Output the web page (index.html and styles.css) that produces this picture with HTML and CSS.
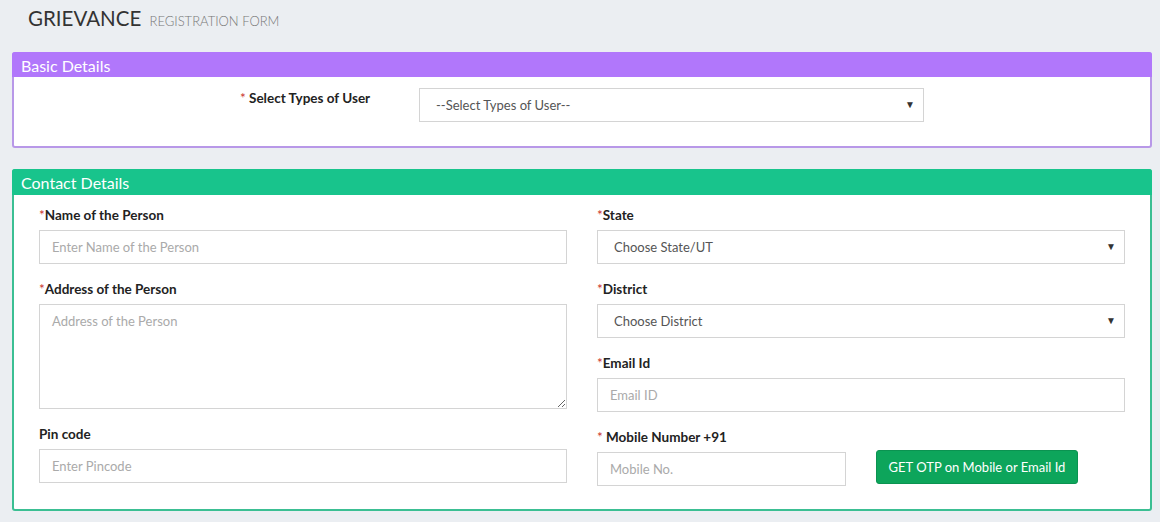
FILE: index.html
```html
<!DOCTYPE html>
<html>
<head>
<meta charset="utf-8">
<link rel="stylesheet" href="styles.css">
</head>
<body>
<div class="page">
  <h1 class="title">GRIEVANCE <small>REGISTRATION FORM</small></h1>

  <section class="panel panel-purple">
    <div class="panel-head">Basic Details</div>
    <div class="panel-body basic-body">
      <label class="lbl basic-lbl"><span class="req">*</span> Select Types of User</label>
      <div class="sel basic-sel">
        <select><option>--Select Types of User--</option></select>
        <span class="caret">▼</span>
      </div>
    </div>
  </section>

  <section class="panel panel-green">
    <div class="panel-head">Contact Details</div>
    <div class="panel-body cols">
      <div class="col">
        <div class="group">
          <label class="lbl"><span class="req">*</span>Name of the Person</label>
          <input class="ctl" type="text" placeholder="Enter Name of the Person">
        </div>
        <div class="group">
          <label class="lbl"><span class="req">*</span>Address of the Person</label>
          <textarea class="ctl area" placeholder="Address of the Person"></textarea>
        </div>
        <div class="group">
          <label class="lbl">Pin code</label>
          <input class="ctl" type="text" placeholder="Enter Pincode">
        </div>
      </div>
      <div class="col">
        <div class="group">
          <label class="lbl"><span class="req">*</span>State</label>
          <div class="sel">
            <select><option>Choose State/UT</option></select>
            <span class="caret">▼</span>
          </div>
        </div>
        <div class="group">
          <label class="lbl"><span class="req">*</span>District</label>
          <div class="sel">
            <select><option>Choose District</option></select>
            <span class="caret">▼</span>
          </div>
        </div>
        <div class="group">
          <label class="lbl"><span class="req">*</span>Email Id</label>
          <input class="ctl" type="text" placeholder="Email ID">
        </div>
        <div class="group">
          <label class="lbl"><span class="req">*</span> Mobile Number +91</label>
          <div class="mobile-row">
            <input class="ctl" type="text" placeholder="Mobile No.">
            <div class="btn-cell"><button class="btn" type="button">GET OTP on Mobile or Email Id</button></div>
          </div>
        </div>
      </div>
    </div>
  </section>
</div>
</body>
</html>
```

FILE: styles.css
```css
* { box-sizing: border-box; }
html, body { margin: 0; padding: 0; }
body {
  background: #ebeef2;
  font-family: "Source Sans Pro", Lato, "Noto Sans", sans-serif;
  color: #333;
}
.page { padding: 0 8px 0 12px; width: 1160px; }

.title {
  margin: 0;
  padding: 6px 0 0 16px;
  height: 52px;
  font-size: 20.5px;
  font-weight: 400;
  color: #333;
}
.title small {
  font-size: 13px;
  font-weight: 300;
  color: #777;
  margin-left: 3px;
}

.panel {
  background: #fff;
  border: 2px solid;
  border-radius: 3px;
  width: 1140px;
}
.panel-purple { border-color: #b898e8; }
.panel-green { border-color: #3bbf93; margin-top: 21px; }

.panel-head {
  color: #fff;
  font-size: 16px;
  padding-left: 9px;
  margin: -2px -2px 0 -2px;
  border-radius: 3px 3px 0 0;
}
.panel-purple .panel-head { background: #b177fb; height: 25px; line-height: 28px; }
.panel-green .panel-head { background: #18c48c; height: 26px; line-height: 28px; }

.basic-body {
  display: flex;
  align-items: flex-start;
  padding: 11px 0 24px 226px;
}
.basic-lbl { width: 179px; padding-top: 1px; }
.basic-sel { width: 505px; }

.lbl {
  display: block;
  font-size: 13.5px;
  font-weight: 700;
  color: #222;
  line-height: 18px;
}
.req { color: #c9302c; font-weight: 400; }

.cols {
  display: flex;
  gap: 30px;
  padding: 11px 25px 23px 25px;
}
.col { flex: 1; display: flex; flex-direction: column; gap: 16px; }
.group { display: flex; flex-direction: column; gap: 6px; }

.ctl {
  width: 100%;
  height: 34px;
  border: 1px solid #d4d4d4;
  border-radius: 0;
  padding: 0 12px;
  font-family: inherit;
  font-size: 13px;
  color: #555;
  background: #fff;
  outline: none;
}
.ctl::placeholder { color: #aaa; }
.area { height: 105px; padding-top: 8px; resize: vertical; display: block; }

.sel { position: relative; height: 34px; }
.sel select {
  -webkit-appearance: none;
  appearance: none;
  width: 100%;
  height: 34px;
  border: 1px solid #d4d4d4;
  border-radius: 0;
  background: #fff;
  padding: 0 16px;
  font-family: inherit;
  font-size: 13px;
  color: #555;
  outline: none;
}
.caret {
  position: absolute;
  right: 9px;
  top: 10px;
  font-size: 10px;
  color: #333;
  pointer-events: none;
}

.mobile-row { display: flex; gap: 30px; align-items: flex-start; }
.mobile-row .ctl { width: 249px; flex: none; }
.btn-cell { flex: 1; margin-top: -2px; }
.btn {
  height: 34px;
  width: 202px;
  background: #0da55b;
  border: 1px solid #0b9351;
  border-radius: 3px;
  color: #fff;
  font-family: inherit;
  font-size: 13px;
  padding: 0 10px;
}
```
